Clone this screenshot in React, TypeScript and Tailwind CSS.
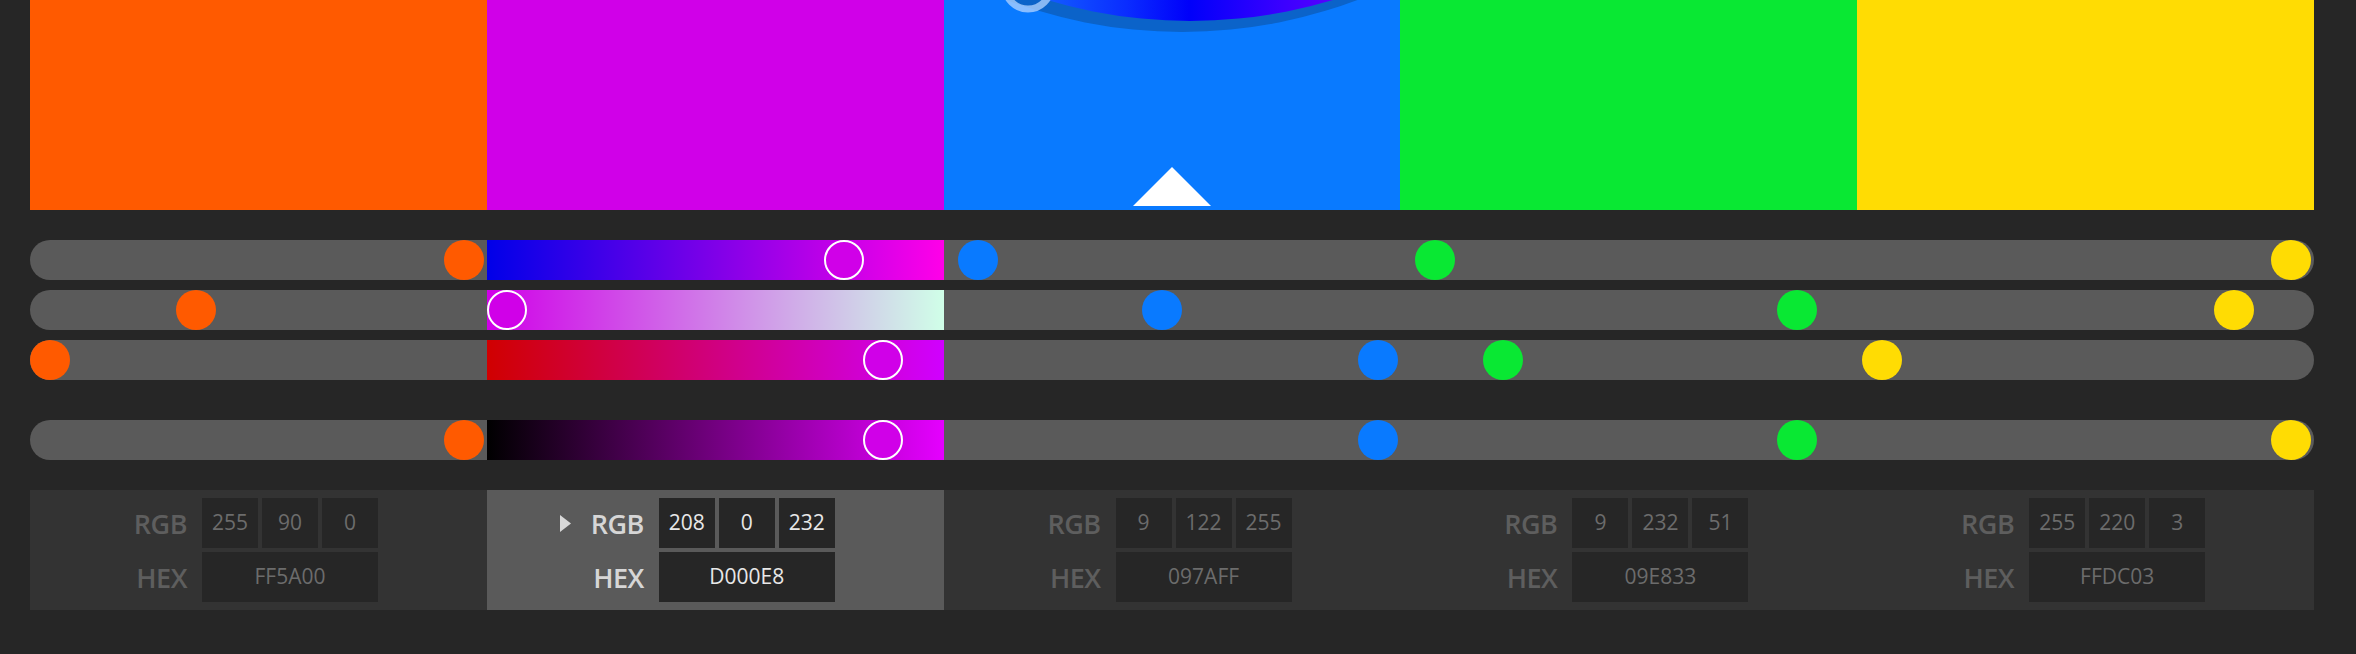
import React from 'react';

type Swatch = { hex: string; rgb: [number, number, number]; bg: string };

const SWATCHES: Swatch[] = [
  { hex: 'FF5A00', rgb: [255, 90, 0], bg: 'bg-[#ff5a00]' },
  { hex: 'D000E8', rgb: [208, 0, 232], bg: 'bg-[#d000e8]' },
  { hex: '097AFF', rgb: [9, 122, 255], bg: 'bg-[#097aff]' },
  { hex: '09E833', rgb: [9, 232, 51], bg: 'bg-[#09e833]' },
  { hex: 'FFDC03', rgb: [255, 220, 3], bg: 'bg-[#ffdc03]' },
];

const ACTIVE = 1;
const WIDTH = 2284;
const SEG = WIDTH / 5;

const CHANNELS = [
  { pick: (c: number[]) => c[0] / 255, gradient: 'bg-[linear-gradient(to_right,#0000e8,#ff00e8)]', gap: 'mt-[30px]' },
  { pick: (c: number[]) => c[1] / 255, gradient: 'bg-[linear-gradient(to_right,#d000e8,#d0ffe8)]', gap: 'mt-[10px]' },
  { pick: (c: number[]) => c[2] / 255, gradient: 'bg-[linear-gradient(to_right,#d00000,#d000ff)]', gap: 'mt-[10px]' },
  { pick: (c: number[]) => Math.max(...c) / 255, gradient: 'bg-[linear-gradient(to_right,#000000,#e500ff)]', gap: 'mt-[40px]' },
];

function WheelPeek() {
  // bottom edge of the colour wheel popover that hangs over the blue swatch
  return (
    <svg className="pointer-events-none absolute left-0 top-0" width="457" height="60" viewBox="0 0 457 60">
      <defs>
        <linearGradient id="hue" x1="90" y1="0" x2="400" y2="0" gradientUnits="userSpaceOnUse">
          <stop offset="0" stopColor="#1463ff" />
          <stop offset="0.3" stopColor="#0a2cff" />
          <stop offset="0.5" stopColor="#0000fa" />
          <stop offset="0.8" stopColor="#3a00ff" />
          <stop offset="1" stopColor="#5c00ff" />
        </linearGradient>
      </defs>
      <circle cx="238" cy="-465" r="497" fill="#0b63c9" />
      <circle cx="246" cy="-476" r="497" fill="url(#hue)" />
      <circle cx="84" cy="-14" r="23" fill="none" stroke="#b4d4ff" strokeOpacity="0.75" strokeWidth="7" />
    </svg>
  );
}

function Track({ row }: { row: number }) {
  const ch = CHANNELS[row];
  return (
    <div className={`relative ml-[30px] h-10 w-[2284px] rounded-full bg-[#5a5a5a] ${ch.gap}`}>
      <div className="grid h-full grid-cols-5">
        {SWATCHES.map((s, i) => (
          <div key={s.hex} className={i === ACTIVE ? ch.gradient : ''} />
        ))}
      </div>
      {SWATCHES.map((s, i) => {
        const center = i * SEG + 20 + ch.pick(s.rgb) * 414;
        return (
          <div
            key={s.hex}
            className={`absolute top-0 size-10 rounded-full ${s.bg} ${i === ACTIVE ? 'border-2 border-white' : ''}`}
            style={{ left: center - 20 }}
          />
        );
      })}
    </div>
  );
}

function Field({ s, active }: { s: Swatch; active: boolean }) {
  const label = active ? 'text-[#d6d6d6]' : 'text-[#5e5e5e]';
  const value = active ? 'text-[#e8e8e8]' : 'text-[#6c6c6c]';
  return (
    <div className={`flex flex-col justify-center gap-1 ${active ? 'bg-[#5a5a5a]' : ''}`}>
      <div className="flex h-[50px] items-center">
        <div className="flex w-[157px] items-center justify-end gap-5">
          {active && (
            <svg width="11" height="17" viewBox="0 0 11 17">
              <polygon points="0,0 11,8.5 0,17" fill="#d8d8d8" />
            </svg>
          )}
          <span className={`text-[27px] font-semibold leading-none tracking-[-0.5px] ${label}`}>RGB</span>
        </div>
        <div className="ml-[15px] flex gap-1">
          {s.rgb.map((v, k) => (
            <div key={k} className={`flex h-[50px] w-[56px] items-center justify-center bg-[#262626] text-[21px] ${value}`}>
              {v}
            </div>
          ))}
        </div>
      </div>
      <div className="flex h-[50px] items-center">
        <div className={`w-[157px] text-right text-[27px] font-semibold leading-none tracking-[-0.5px] ${label}`}>HEX</div>
        <div className={`ml-[15px] flex h-[50px] w-[176px] items-center justify-center bg-[#262626] text-[21px] ${value}`}>
          {s.hex}
        </div>
      </div>
    </div>
  );
}

export default function App() {
  return (
    <div className="h-[654px] w-[2356px] overflow-hidden bg-[#262626] font-['Open_Sans',sans-serif]">
      <div className="ml-[30px] grid h-[210px] w-[2284px] grid-cols-5">
        {SWATCHES.map((s, i) => (
          <div key={s.hex} className={`relative overflow-hidden ${s.bg}`}>
            {i === 2 && (
              <>
                <WheelPeek />
                <svg className="absolute bottom-1 left-1/2 -translate-x-1/2" width="78" height="39" viewBox="0 0 78 39">
                  <polygon points="39,0 78,39 0,39" fill="#ffffff" />
                </svg>
              </>
            )}
          </div>
        ))}
      </div>

      {CHANNELS.map((_, r) => (
        <Track key={r} row={r} />
      ))}

      <div className="ml-[30px] mt-[30px] grid h-[120px] w-[2284px] grid-cols-5 bg-[#333333]">
        {SWATCHES.map((s, i) => (
          <Field key={s.hex} s={s} active={i === ACTIVE} />
        ))}
      </div>
    </div>
  );
}
